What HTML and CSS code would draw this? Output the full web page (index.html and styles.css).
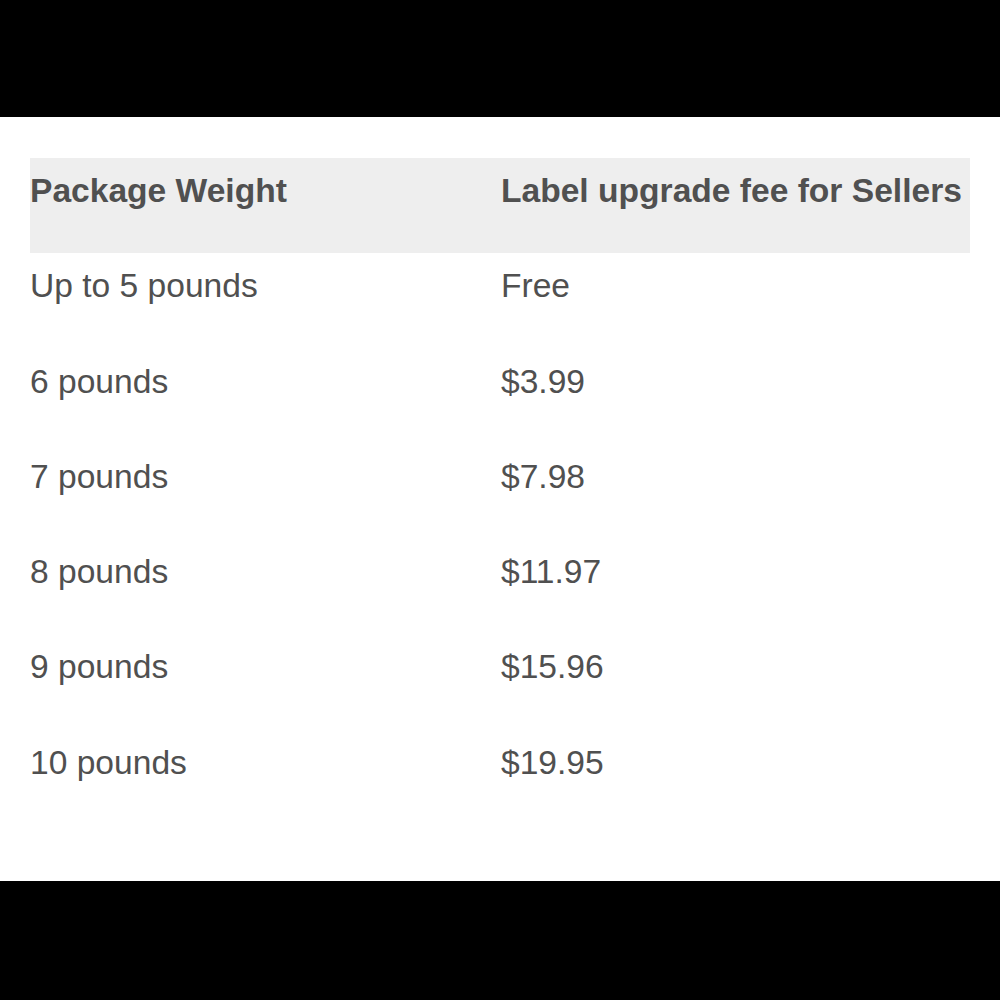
FILE: index.html
```html
<!DOCTYPE html>
<html>
<head>
<meta charset="utf-8">
<link rel="stylesheet" href="styles.css">
</head>
<body>
<div class="bar top"></div>
<main class="sheet">
  <table class="fees">
    <thead>
      <tr><th>Package Weight</th><th>Label upgrade fee for Sellers</th></tr>
    </thead>
    <tbody>
      <tr><td>Up to 5 pounds</td><td>Free</td></tr>
      <tr><td>6 pounds</td><td>$3.99</td></tr>
      <tr><td>7 pounds</td><td>$7.98</td></tr>
      <tr><td>8 pounds</td><td>$11.97</td></tr>
      <tr><td>9 pounds</td><td>$15.96</td></tr>
      <tr><td>10 pounds</td><td>$19.95</td></tr>
    </tbody>
  </table>
</main>
<div class="bar bottom"></div>
</body>
</html>
```
FILE: styles.css
```css
html, body {
  margin: 0;
  padding: 0;
  background: #000;
}
.bar { background: #000; }
.bar.top { height: 117px; }
.bar.bottom { height: 119px; }
.sheet {
  background: #fff;
  height: 764px;
  box-sizing: border-box;
  padding: 41px 30px 0 30px;
}
.fees {
  width: 940px;
  border-collapse: collapse;
  border-spacing: 0;
  font-family: "Liberation Sans", Arial, sans-serif;
  font-size: 33.6px;
  line-height: 38px;
  color: #505050;
}
.fees th, .fees td {
  text-align: left;
  vertical-align: top;
  padding: 14px 0 0 0;
  height: 81.3px;
}
.fees th:first-child, .fees td:first-child { width: 471px; }
.fees thead tr { background: #eeeeee; }
.fees th { font-weight: bold; }
```
